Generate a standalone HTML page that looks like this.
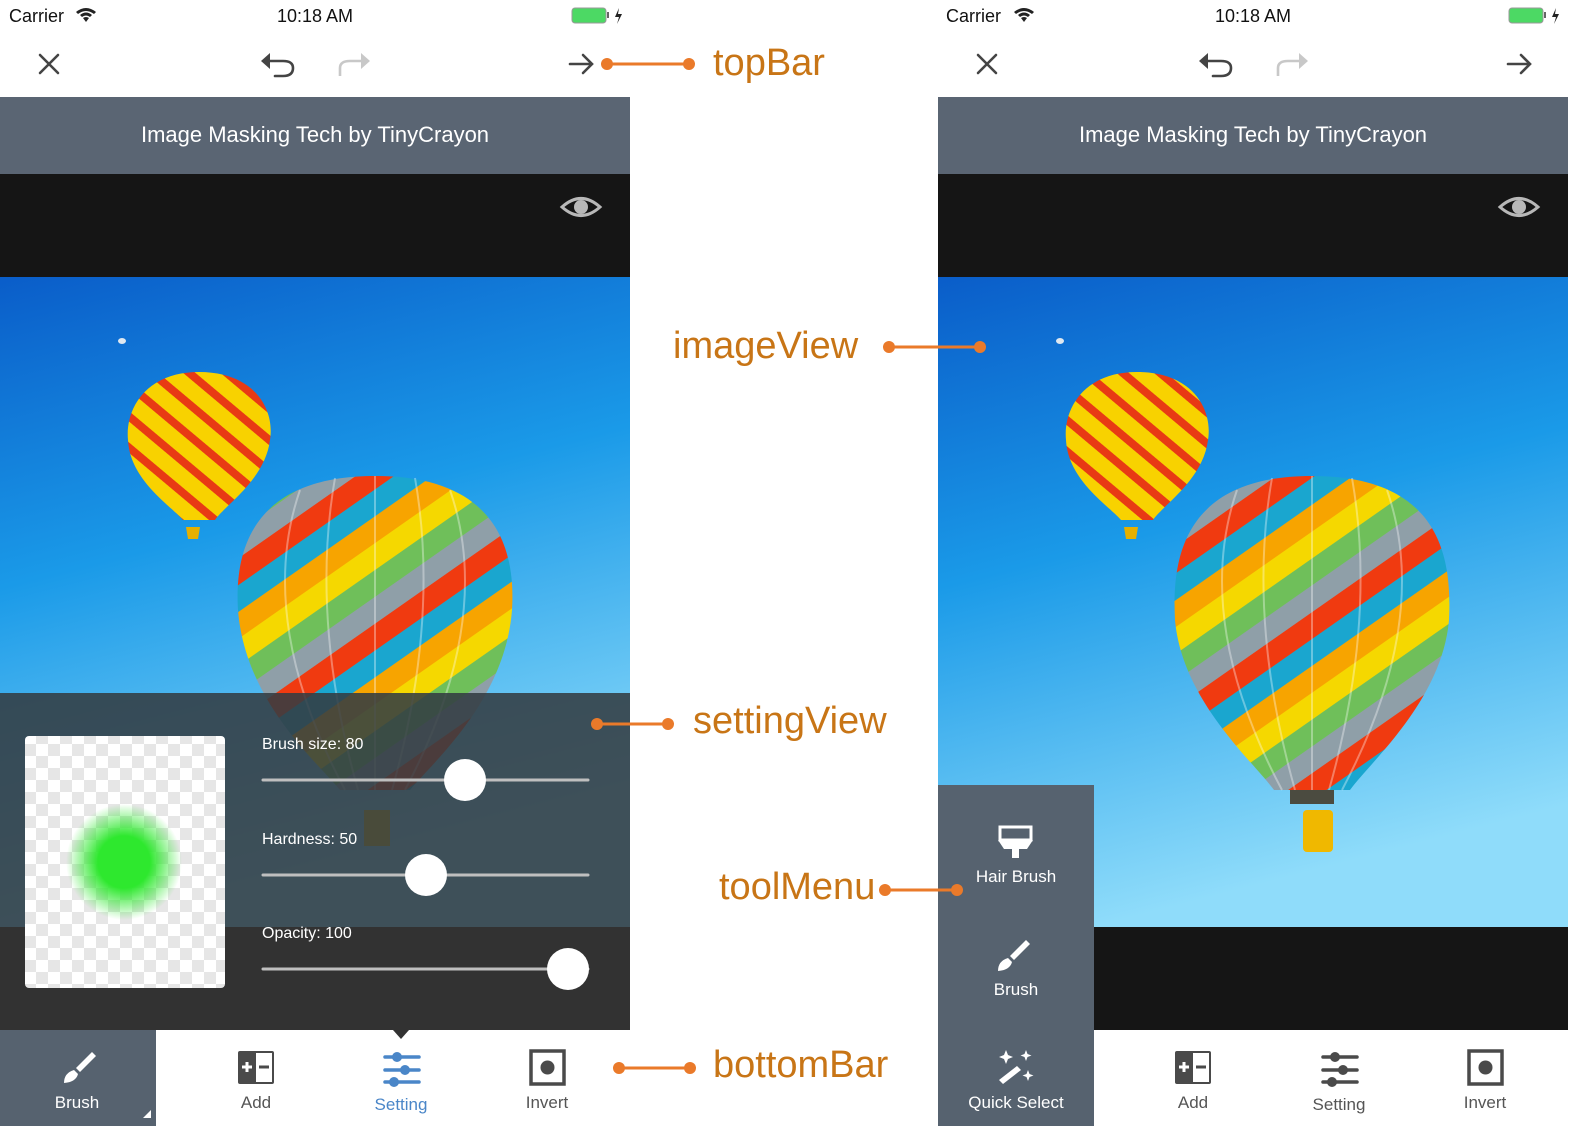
<!DOCTYPE html>
<html><head><meta charset="utf-8">
<style>
*{margin:0;padding:0;box-sizing:border-box}
body{width:1572px;height:1126px;position:relative;overflow:hidden;background:#fff;font-family:"Liberation Sans",sans-serif}
.a{position:absolute}
.t{position:absolute;font-size:17px;color:#555;text-align:center;width:120px}
.ann{position:absolute;color:#c87516;font-size:38px;font-family:"Liberation Sans",sans-serif}
</style></head><body>

<svg class="a" style="left:0;top:0" width="1572" height="1126" viewBox="0 0 1572 1126">
<defs>
<linearGradient id="sky" x1="0" y1="0" x2="0.25" y2="1">
<stop offset="0" stop-color="#0a5dc9"/><stop offset="0.45" stop-color="#1a9ae8"/><stop offset="1" stop-color="#8fdcfa"/>
</linearGradient>
<pattern id="big" width="132" height="132" patternUnits="userSpaceOnUse" patternTransform="rotate(-35)">
<rect width="132" height="22" fill="#f5d800"/><rect y="22" width="132" height="22" fill="#6fbf5a"/><rect y="44" width="132" height="22" fill="#8f9fa8"/><rect y="66" width="132" height="22" fill="#f03a10"/><rect y="88" width="132" height="22" fill="#1aa6cf"/><rect y="110" width="132" height="22" fill="#f7a400"/>
</pattern>
<pattern id="small" width="24" height="24" patternUnits="userSpaceOnUse" patternTransform="rotate(40)">
<rect width="24" height="16" fill="#f8d200"/><rect y="16" width="24" height="8" fill="#e83a14"/>
</pattern>
<pattern id="chk" width="24" height="24" patternUnits="userSpaceOnUse">
<rect width="24" height="24" fill="#fff"/><rect width="12" height="12" fill="#e6e6e6"/><rect x="12" y="12" width="12" height="12" fill="#e6e6e6"/>
</pattern>
<radialGradient id="green"><stop offset="0.45" stop-color="#2ee82e"/><stop offset="1" stop-color="#2ee82e" stop-opacity="0"/></radialGradient>
<clipPath id="cl"><rect x="0" y="277" width="630" height="650"/></clipPath>
<clipPath id="cr"><rect x="938" y="277" width="630" height="650"/></clipPath>
</defs>

<!-- left phone -->
<rect x="0" y="97" width="630" height="77" fill="#5a6573"/>
<rect x="0" y="174" width="630" height="103" fill="#151515"/>
<rect x="0" y="277" width="630" height="650" fill="url(#sky)"/>
<g clip-path="url(#cl)">
<ellipse cx="122" cy="341" rx="4" ry="3" fill="#dfe8f0"/>
<path d="M199,372 C255,372 275,410 270,440 C265,480 225,505 215,520 L183,520 C170,505 130,480 128,440 C125,410 145,372 199,372Z" fill="url(#small)"/>
<path d="M186,527 h14 l-2,12 h-10Z" fill="#e6b000"/>
<path d="M375,476 C505,476 515,560 512,610 C505,700 435,760 410,790 L340,790 C315,760 245,700 238,610 C235,560 245,476 375,476Z" fill="url(#big)"/>
<g stroke="#fff" stroke-opacity="0.35" stroke-width="2" fill="none"><path d="M300,490 Q255,620 345,790"/><path d="M335,478 Q310,620 358,790"/><path d="M375,476 V790"/><path d="M415,478 Q440,620 392,790"/><path d="M450,490 Q495,620 405,790"/></g>
<rect x="364" y="810" width="26" height="36" fill="#e6b000"/>
</g>
<rect x="0" y="927" width="630" height="103" fill="#151515"/>
<rect x="0" y="693" width="630" height="234" fill="#333c42" fill-opacity="0.88"/>
<rect x="0" y="927" width="630" height="103" fill="#323232"/>
<rect x="25" y="736" width="200" height="252" rx="4" fill="url(#chk)"/>
<circle cx="124" cy="862" r="58" fill="url(#green)"/>
<g stroke="#bfbfbf" stroke-width="3" stroke-linecap="round">
<line x1="263" y1="780" x2="588" y2="780"/><line x1="263" y1="875" x2="588" y2="875"/><line x1="263" y1="969" x2="588" y2="969"/></g>
<g fill="#fff"><circle cx="465" cy="780" r="21"/><circle cx="426" cy="875" r="21"/><circle cx="568" cy="969" r="21"/></g>
<rect x="0" y="1030" width="156" height="96" fill="#56626f"/>
<path d="M143,1118 L151,1110 L151,1118Z" fill="#fff"/>
<path d="M393,1030 L409,1030 L401,1039Z" fill="#323232"/>

<!-- right phone -->
<rect x="938" y="97" width="630" height="77" fill="#5a6573"/>
<rect x="938" y="174" width="630" height="103" fill="#151515"/>
<rect x="938" y="277" width="630" height="650" fill="url(#sky)"/>
<g clip-path="url(#cr)">
<ellipse cx="1060" cy="341" rx="4" ry="3" fill="#dfe8f0"/>
<path d="M1137,372 C1193,372 1213,410 1208,440 C1203,480 1163,505 1153,520 L1121,520 C1108,505 1068,480 1066,440 C1063,410 1083,372 1137,372Z" fill="url(#small)"/>
<path d="M1124,527 h14 l-2,12 h-10Z" fill="#e6b000"/>
<path d="M1312,476 C1442,476 1452,560 1449,620 C1442,700 1372,760 1350,790 L1274,790 C1252,760 1182,700 1175,620 C1172,560 1182,476 1312,476Z" fill="url(#big)"/>
<g stroke="#fff" stroke-opacity="0.35" stroke-width="2" fill="none"><path d="M1237,490 Q1192,620 1282,790"/><path d="M1272,478 Q1247,620 1295,790"/><path d="M1312,476 V790"/><path d="M1352,478 Q1377,620 1329,790"/><path d="M1387,490 Q1432,620 1342,790"/></g>
<rect x="1290" y="790" width="44" height="14" fill="#4b4b40"/>
<rect x="1303" y="810" width="30" height="42" rx="4" fill="#f0b800"/>
</g>
<rect x="938" y="927" width="630" height="103" fill="#151515"/>
<rect x="938" y="785" width="156" height="341" fill="#56626f"/>

<!-- eyes -->
<g fill="none" stroke="#b8b8b8" stroke-width="3"><path d="M562,207 Q581,190 600,207 Q581,224 562,207Z"/><path d="M1500,207 Q1519,190 1538,207 Q1519,224 1500,207Z"/></g>
<circle cx="581" cy="207" r="7" fill="#b8b8b8"/><circle cx="1519" cy="207" r="7" fill="#b8b8b8"/>

<!-- top bar icons -->
<g stroke="#444" stroke-width="2.6" fill="none" stroke-linecap="round">
<path d="M40,55 L58,73 M58,55 L40,73"/><path d="M978,55 L996,73 M996,55 L978,73"/>
<path d="M570,64 L592,64 M583,55 L592,64 L583,73"/><path d="M1508,64 L1530,64 M1521,55 L1530,64 L1521,73"/>
<path d="M268,61 L283,61 Q293,61 293,68 Q293,76 283,76 L275,76"/><path d="M1206,61 L1221,61 Q1231,61 1231,68 Q1231,76 1221,76 L1213,76"/>
</g>
<path d="M261,61 L270,53 L270,69Z" fill="#444"/><path d="M1199,61 L1208,53 L1208,69Z" fill="#444"/>
<g stroke="#c8c8c8" stroke-width="2.6" fill="none"><path d="M362,61 L350,61 Q340,61 340,68 L340,76"/><path d="M1300,61 L1288,61 Q1278,61 1278,68 L1278,76"/></g>
<path d="M370,61 L361,53 L361,69Z" fill="#c8c8c8"/><path d="M1308,61 L1299,53 L1299,69Z" fill="#c8c8c8"/>

<!-- battery -->
<rect x="572" y="8" width="34" height="15" rx="3" fill="#4cd964" stroke="#999"/><rect x="607" y="12" width="2" height="6" fill="#666"/>
<path d="M619,8 L615,17 L619,17 L617,24 L622,14 L618,14Z" fill="#222"/>
<rect x="1509" y="8" width="34" height="15" rx="3" fill="#4cd964" stroke="#999"/><rect x="1544" y="12" width="2" height="6" fill="#666"/>
<path d="M1556,8 L1552,17 L1556,17 L1554,24 L1559,14 L1555,14Z" fill="#222"/>
<g fill="#222"><path d="M76,12 Q86,4 96,12 L94,14 Q86,8 78,14Z M80,15 Q86,10 92,15 L90,17 Q86,14 82,17Z M86,22 L83,18 Q86,16 89,18Z"/>
<path d="M1014,12 Q1024,4 1034,12 L1032,14 Q1024,8 1016,14Z M1018,15 Q1024,10 1030,15 L1028,17 Q1024,14 1020,17Z M1024,22 L1021,18 Q1024,16 1027,18Z"/></g>

<!-- bottom bar icons -->
<path d="M92,1052 L96,1056 L80,1072 L76,1068Z" fill="#fff"/><path d="M74,1070 L78,1074 Q76,1082 64,1083 Q64,1073 74,1070Z" fill="#fff"/>
<path d="M1026,940 L1030,944 L1014,960 L1010,956Z" fill="#fff"/><path d="M1008,958 L1012,962 Q1010,970 998,971 Q998,961 1008,958Z" fill="#fff"/>
<g><rect x="238" y="1051" width="36" height="33" rx="2" fill="#4a4a4a"/><rect x="256" y="1053" width="16" height="29" fill="#fff"/><path d="M242,1067 h10 M247,1062 v10" stroke="#fff" stroke-width="3"/><path d="M259,1067 h10" stroke="#4a4a4a" stroke-width="3"/></g>
<g><rect x="1175" y="1051" width="36" height="33" rx="2" fill="#4a4a4a"/><rect x="1193" y="1053" width="16" height="29" fill="#fff"/><path d="M1179,1067 h10 M1184,1062 v10" stroke="#fff" stroke-width="3"/><path d="M1196,1067 h10" stroke="#4a4a4a" stroke-width="3"/></g>
<g stroke="#4a86c8" stroke-width="3.5" stroke-linecap="round"><path d="M385,1057 h34 M385,1070 h34 M385,1082 h34"/></g>
<g fill="#4a86c8"><circle cx="397" cy="1057" r="5"/><circle cx="405" cy="1070" r="5"/><circle cx="394" cy="1082" r="5"/></g>
<g stroke="#4a4a4a" stroke-width="3.5" stroke-linecap="round"><path d="M1323,1057 h34 M1323,1070 h34 M1323,1082 h34"/></g>
<g fill="#4a4a4a"><circle cx="1335" cy="1057" r="5"/><circle cx="1343" cy="1070" r="5"/><circle cx="1332" cy="1082" r="5"/></g>
<rect x="531" y="1051" width="33" height="33" fill="none" stroke="#4a4a4a" stroke-width="3.5"/><circle cx="547.5" cy="1067.5" r="7" fill="#4a4a4a"/>
<rect x="1469" y="1051" width="33" height="33" fill="none" stroke="#4a4a4a" stroke-width="3.5"/><circle cx="1485.5" cy="1067.5" r="7" fill="#4a4a4a"/>
<path d="M1000,827 h31 v13 h-31Z" fill="none" stroke="#fff" stroke-width="3"/><path d="M998,840 h35 l-6,9 h-23Z" fill="#fff"/><rect x="1012" y="848" width="7" height="10" fill="#fff"/>
<path d="M1017,1066 L1021,1070 L1003,1084 L999,1080Z" fill="#fff"/>
<g fill="#fff"><path d="M1006,1050 l2,5 5,2 -5,2 -2,5 -2,-5 -5,-2 5,-2Z"/><path d="M1026,1050 l1.5,4 4,1.5 -4,1.5 -1.5,4 -1.5,-4 -4,-1.5 4,-1.5Z"/><path d="M1028,1070 l1.5,4 4,1.5 -4,1.5 -1.5,4 -1.5,-4 -4,-1.5 4,-1.5Z"/></g>

<!-- annotations -->
<g stroke="#ea7a2a" stroke-width="3"><line x1="607" y1="64" x2="689" y2="64"/><line x1="889" y1="347" x2="980" y2="347"/><line x1="597" y1="724" x2="668" y2="724"/><line x1="885" y1="890" x2="957" y2="890"/><line x1="619" y1="1068" x2="690" y2="1068"/></g>
<g fill="#ea7a2a"><circle cx="607" cy="64" r="6"/><circle cx="689" cy="64" r="6"/><circle cx="889" cy="347" r="6"/><circle cx="980" cy="347" r="6"/><circle cx="597" cy="724" r="6"/><circle cx="668" cy="724" r="6"/><circle cx="885" cy="890" r="6"/><circle cx="957" cy="890" r="6"/><circle cx="619" cy="1068" r="6"/><circle cx="690" cy="1068" r="6"/></g>
</svg>

<div class="a" style="left:9px;top:6px;font-size:18px;color:#111">Carrier</div>
<div class="a" style="left:277px;top:6px;font-size:18px;color:#111">10:18 AM</div>
<div class="a" style="left:946px;top:6px;font-size:18px;color:#111">Carrier</div>
<div class="a" style="left:1215px;top:6px;font-size:18px;color:#111">10:18 AM</div>

<div class="a" style="left:0;top:122px;width:630px;text-align:center;color:#fff;font-size:22px">Image Masking Tech by TinyCrayon</div>
<div class="a" style="left:938px;top:122px;width:630px;text-align:center;color:#fff;font-size:22px">Image Masking Tech by TinyCrayon</div>

<div class="a" style="left:262px;top:736px;color:#fff;font-size:16px">Brush size: 80</div>
<div class="a" style="left:262px;top:831px;color:#fff;font-size:16px">Hardness: 50</div>
<div class="a" style="left:262px;top:925px;color:#fff;font-size:16px">Opacity: 100</div>

<div class="t" style="left:17px;top:1093px;color:#fff">Brush</div>
<div class="t" style="left:196px;top:1093px">Add</div>
<div class="t" style="left:341px;top:1095px;color:#4a86c8">Setting</div>
<div class="t" style="left:487px;top:1093px">Invert</div>
<div class="t" style="left:1133px;top:1093px">Add</div>
<div class="t" style="left:1279px;top:1095px">Setting</div>
<div class="t" style="left:1425px;top:1093px">Invert</div>
<div class="t" style="left:941px;top:867px;width:150px;color:#fff">Hair Brush</div>
<div class="t" style="left:941px;top:980px;width:150px;color:#fff">Brush</div>
<div class="t" style="left:941px;top:1093px;width:150px;color:#fff">Quick Select</div>

<div class="ann" style="left:713px;top:42px">topBar</div>
<div class="ann" style="left:673px;top:325px">imageView</div>
<div class="ann" style="left:693px;top:700px">settingView</div>
<div class="ann" style="left:719px;top:866px">toolMenu</div>
<div class="ann" style="left:713px;top:1044px">bottomBar</div>
</body></html>
